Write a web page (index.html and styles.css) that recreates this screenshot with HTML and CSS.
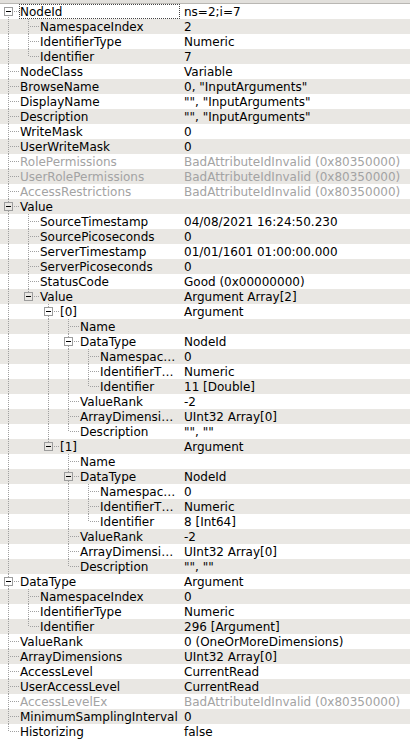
FILE: index.html
```html
<!DOCTYPE html>
<html lang="en">
<head>
  <meta charset="UTF-8">
  <title>Attributes</title>
  <link rel="stylesheet" href="styles.css">
</head>
<body>
  <div class="tree">
    <div class="head"></div>

    <div class="row focus"><div class="key"><span class="b top"><i class="box"></i></span><span class="name">NodeId</span></div><div class="val">ns=2;i=7</div></div>
    <div class="row"><div class="key"><span class="i v"></span><span class="b"></span><span class="name">NamespaceIndex</span></div><div class="val">2</div></div>
    <div class="row"><div class="key"><span class="i v"></span><span class="b"></span><span class="name">IdentifierType</span></div><div class="val">Numeric</div></div>
    <div class="row"><div class="key"><span class="i v"></span><span class="b end"></span><span class="name">Identifier</span></div><div class="val">7</div></div>
    <div class="row"><div class="key"><span class="b"></span><span class="name">NodeClass</span></div><div class="val">Variable</div></div>
    <div class="row"><div class="key"><span class="b"></span><span class="name">BrowseName</span></div><div class="val">0, "InputArguments"</div></div>
    <div class="row"><div class="key"><span class="b"></span><span class="name">DisplayName</span></div><div class="val">"", "InputArguments"</div></div>
    <div class="row"><div class="key"><span class="b"></span><span class="name">Description</span></div><div class="val">"", "InputArguments"</div></div>
    <div class="row"><div class="key"><span class="b"></span><span class="name">WriteMask</span></div><div class="val">0</div></div>
    <div class="row"><div class="key"><span class="b"></span><span class="name">UserWriteMask</span></div><div class="val">0</div></div>
    <div class="row off"><div class="key"><span class="b"></span><span class="name">RolePermissions</span></div><div class="val">BadAttributeIdInvalid (0x80350000)</div></div>
    <div class="row off"><div class="key"><span class="b"></span><span class="name">UserRolePermissions</span></div><div class="val">BadAttributeIdInvalid (0x80350000)</div></div>
    <div class="row off"><div class="key"><span class="b"></span><span class="name">AccessRestrictions</span></div><div class="val">BadAttributeIdInvalid (0x80350000)</div></div>

    <div class="row"><div class="key"><span class="b"><i class="box"></i></span><span class="name">Value</span></div><div class="val"></div></div>
    <div class="row"><div class="key"><span class="i v"></span><span class="b"></span><span class="name">SourceTimestamp</span></div><div class="val">04/08/2021 16:24:50.230</div></div>
    <div class="row"><div class="key"><span class="i v"></span><span class="b"></span><span class="name">SourcePicoseconds</span></div><div class="val">0</div></div>
    <div class="row"><div class="key"><span class="i v"></span><span class="b"></span><span class="name">ServerTimestamp</span></div><div class="val">01/01/1601 01:00:00.000</div></div>
    <div class="row"><div class="key"><span class="i v"></span><span class="b"></span><span class="name">ServerPicoseconds</span></div><div class="val">0</div></div>
    <div class="row"><div class="key"><span class="i v"></span><span class="b"></span><span class="name">StatusCode</span></div><div class="val">Good (0x00000000)</div></div>
    <div class="row"><div class="key"><span class="i v"></span><span class="b end"><i class="box"></i></span><span class="name">Value</span></div><div class="val">Argument Array[2]</div></div>

    <div class="row"><div class="key"><span class="i v"></span><span class="i"></span><span class="b"><i class="box"></i></span><span class="name">[0]</span></div><div class="val">Argument</div></div>
    <div class="row"><div class="key"><span class="i v"></span><span class="i"></span><span class="i v"></span><span class="b"></span><span class="name">Name</span></div><div class="val"></div></div>
    <div class="row"><div class="key"><span class="i v"></span><span class="i"></span><span class="i v"></span><span class="b"><i class="box"></i></span><span class="name">DataType</span></div><div class="val">NodeId</div></div>
    <div class="row"><div class="key"><span class="i v"></span><span class="i"></span><span class="i v"></span><span class="i v"></span><span class="b"></span><span class="name">Namespac…</span></div><div class="val">0</div></div>
    <div class="row"><div class="key"><span class="i v"></span><span class="i"></span><span class="i v"></span><span class="i v"></span><span class="b"></span><span class="name">IdentifierT…</span></div><div class="val">Numeric</div></div>
    <div class="row"><div class="key"><span class="i v"></span><span class="i"></span><span class="i v"></span><span class="i v"></span><span class="b end"></span><span class="name">Identifier</span></div><div class="val">11 [Double]</div></div>
    <div class="row"><div class="key"><span class="i v"></span><span class="i"></span><span class="i v"></span><span class="b"></span><span class="name">ValueRank</span></div><div class="val">-2</div></div>
    <div class="row"><div class="key"><span class="i v"></span><span class="i"></span><span class="i v"></span><span class="b"></span><span class="name">ArrayDimensi…</span></div><div class="val">UInt32 Array[0]</div></div>
    <div class="row"><div class="key"><span class="i v"></span><span class="i"></span><span class="i v"></span><span class="b end"></span><span class="name">Description</span></div><div class="val">"", ""</div></div>

    <div class="row"><div class="key"><span class="i v"></span><span class="i"></span><span class="b end"><i class="box"></i></span><span class="name">[1]</span></div><div class="val">Argument</div></div>
    <div class="row"><div class="key"><span class="i v"></span><span class="i"></span><span class="i"></span><span class="b"></span><span class="name">Name</span></div><div class="val"></div></div>
    <div class="row"><div class="key"><span class="i v"></span><span class="i"></span><span class="i"></span><span class="b"><i class="box"></i></span><span class="name">DataType</span></div><div class="val">NodeId</div></div>
    <div class="row"><div class="key"><span class="i v"></span><span class="i"></span><span class="i"></span><span class="i v"></span><span class="b"></span><span class="name">Namespac…</span></div><div class="val">0</div></div>
    <div class="row"><div class="key"><span class="i v"></span><span class="i"></span><span class="i"></span><span class="i v"></span><span class="b"></span><span class="name">IdentifierT…</span></div><div class="val">Numeric</div></div>
    <div class="row"><div class="key"><span class="i v"></span><span class="i"></span><span class="i"></span><span class="i v"></span><span class="b end"></span><span class="name">Identifier</span></div><div class="val">8 [Int64]</div></div>
    <div class="row"><div class="key"><span class="i v"></span><span class="i"></span><span class="i"></span><span class="b"></span><span class="name">ValueRank</span></div><div class="val">-2</div></div>
    <div class="row"><div class="key"><span class="i v"></span><span class="i"></span><span class="i"></span><span class="b"></span><span class="name">ArrayDimensi…</span></div><div class="val">UInt32 Array[0]</div></div>
    <div class="row"><div class="key"><span class="i v"></span><span class="i"></span><span class="i"></span><span class="b end"></span><span class="name">Description</span></div><div class="val">"", ""</div></div>

    <div class="row"><div class="key"><span class="b"><i class="box"></i></span><span class="name">DataType</span></div><div class="val">Argument</div></div>
    <div class="row"><div class="key"><span class="i v"></span><span class="b"></span><span class="name">NamespaceIndex</span></div><div class="val">0</div></div>
    <div class="row"><div class="key"><span class="i v"></span><span class="b"></span><span class="name">IdentifierType</span></div><div class="val">Numeric</div></div>
    <div class="row"><div class="key"><span class="i v"></span><span class="b end"></span><span class="name">Identifier</span></div><div class="val">296 [Argument]</div></div>
    <div class="row"><div class="key"><span class="b"></span><span class="name">ValueRank</span></div><div class="val">0 (OneOrMoreDimensions)</div></div>
    <div class="row"><div class="key"><span class="b"></span><span class="name">ArrayDimensions</span></div><div class="val">UInt32 Array[0]</div></div>
    <div class="row"><div class="key"><span class="b"></span><span class="name">AccessLevel</span></div><div class="val">CurrentRead</div></div>
    <div class="row"><div class="key"><span class="b"></span><span class="name">UserAccessLevel</span></div><div class="val">CurrentRead</div></div>
    <div class="row off"><div class="key"><span class="b"></span><span class="name">AccessLevelEx</span></div><div class="val">BadAttributeIdInvalid (0x80350000)</div></div>
    <div class="row"><div class="key"><span class="b"></span><span class="name">MinimumSamplingInterval</span></div><div class="val">0</div></div>
    <div class="row"><div class="key"><span class="b end"></span><span class="name">Historizing</span></div><div class="val">false</div></div>
  </div>
</body>
</html>
```

FILE: styles.css
```css
/* General */
body {
  margin: 0;
  font-family: "DejaVu Sans", sans-serif;
  font-size: 12px;
  color: #000;
  background: #fff;
}

/* Header remnant at the top */
.head {
  height: 3px;
  background: #e2e0dc;
  border-bottom: 1px solid #b9b7b3;
}

/* Rows */
.row {
  display: flex;
  height: 15px;
  line-height: 16px;
  background: #fff;
}

.row:nth-child(odd) {
  background: #e9e7e3;
}

.row.off {
  color: #a3a3a3;
}

.key {
  flex: none;
  width: 180px;
  display: flex;
}

.name {
  flex: 1;
  min-width: 0;
  height: 15px;
  margin-left: -1px;
  padding-left: 1px;
  white-space: nowrap;
  overflow: hidden;
}

.focus .name {
  outline: 1px dotted #444;
  outline-offset: -1px;
}

.val {
  flex: 1;
  padding-left: 4px;
  white-space: nowrap;
  overflow: hidden;
}

/* Branch lines */
.i,
.b {
  flex: none;
  width: 20px;
  height: 15px;
  background-repeat: no-repeat;
}

.i.v {
  background-image: repeating-linear-gradient(to bottom, #a0a0a0 0 1px, transparent 1px 2px);
  background-size: 1px 15px;
  background-position: 8px 0;
}

.b {
  background-image:
    repeating-linear-gradient(to bottom, #a0a0a0 0 1px, transparent 1px 2px),
    repeating-linear-gradient(to right, #a0a0a0 0 1px, transparent 1px 2px);
  background-size: 1px 15px, 10px 1px;
  background-position: 8px 0, 10px 7px;
}

.b.end {
  background-size: 1px 8px, 10px 1px;
}

.b.top {
  background-size: 1px 8px, 10px 1px;
  background-position: 8px 7px, 10px 7px;
}

/* Expand box */
.box {
  display: flex;
  align-items: center;
  justify-content: center;
  box-sizing: border-box;
  width: 9px;
  height: 9px;
  margin: 3px 0 0 4px;
  border: 1px solid #9c9c9c;
  background: #fff;
}

.row:nth-child(odd) .box {
  background: #e9e7e3;
}

.box::before {
  content: "";
  width: 5px;
  height: 1px;
  background: #000;
}
```
